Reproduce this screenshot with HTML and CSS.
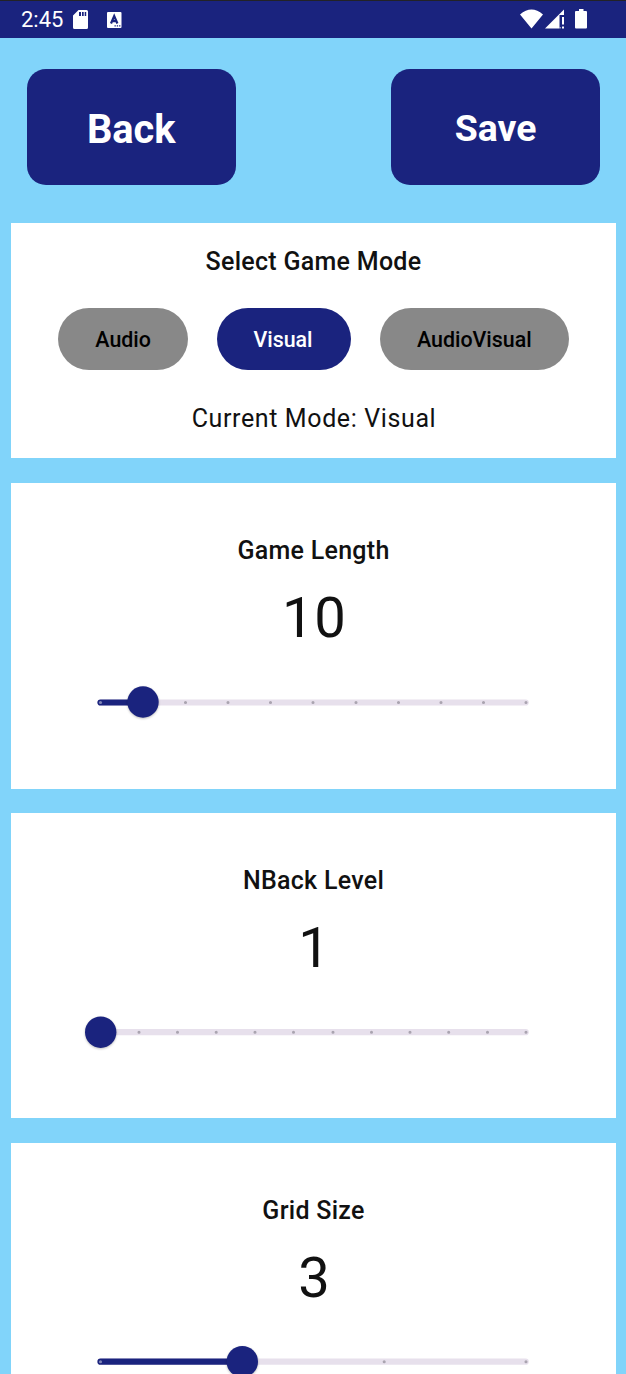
FILE: index.html
```html
<!DOCTYPE html>
<html lang="en">
<head>
<meta charset="utf-8">
<title>Settings</title>
<link rel="stylesheet" href="styles.css">
</head>
<body>
<header class="status">
  <span class="clock">2:45</span>
  <svg class="sd" width="15" height="19" viewBox="0 0 15 19"><path fill="#fff" fill-rule="evenodd" d="M5.5 0H13.5Q15 0 15 1.5V17.5Q15 19 13.5 19H1.500Q0 19 0 17.500V5.500ZM6 2V6H8V2ZM9 2V6H10.700V2ZM11.700 2V6H13.200V2Z"/></svg>
  <svg class="lang" width="15" height="16" viewBox="0 0 15 16"><rect width="14.500" height="16" rx="1" fill="#fff"/><path d="M4 11.500L7.200 4L10.400 11.500M5.200 9.200H9.200" fill="none" stroke="#1a237e" stroke-width="2.200"/><path d="M7.500 13.800h1.300m1 0h1.300m1 0h1.300" stroke="#1a237e" stroke-width="1.200"/></svg>
  <svg class="signals" width="68" height="22" viewBox="0 0 68 22"><path fill="#fff" d="M0 5.500Q11.500-4.500 23 5.500L11.500 19.500ZM25 19.500L44 0.500V6H39.500V19.500ZM42 8h2v7.500h-2zM42 17.500h2v2h-2zM59 0h4.500v2h2.500q1 0 1 1v15.500q0 1-1 1h-10q-1 0-1-1V3q0-1 1-1h3z"/><path fill="#fff" opacity=".5" d="M39.500 18h1.500v1.500h-1.500z"/></svg>
</header>
<main>
  <nav class="actions">
    <button class="action back">Back</button>
    <button class="action save">Save</button>
  </nav>
  <section class="card mode">
    <h2>Select Game Mode</h2>
    <div class="pills">
      <button class="pill audio">Audio</button>
      <button class="pill visual">Visual</button>
      <button class="pill both">AudioVisual</button>
    </div>
    <p class="current">Current Mode: Visual</p>
  </section>
  <section class="card setting length">
    <h2>Game Length</h2>
    <p class="value">10</p>
    <svg class="slider" width="464" height="40" viewBox="82 683 464 40">
      <path class="track" d="M100.500 702.500H525.700"/><path class="filled" d="M100.500 702.500H143"/>
      <path class="ticks" d="M185.500 702.500h0M228 702.500h0M270.500 702.500h0M313 702.500h0M356 702.500h0M398.500 702.500h0M441 702.500h0M483.500 702.500h0M526 702.500h0"/><path class="ticks lit" d="M100.500 702.500h0"/>
      <circle class="thumb" cx="143" cy="702" r="15.700"/>
    </svg>
  </section>
  <section class="card setting level">
    <h2>NBack Level</h2>
    <p class="value">1</p>
    <svg class="slider" width="464" height="40" viewBox="82 683 464 40">
      <path class="track" d="M100.500 702.200H525.700"/>
      <path class="ticks" d="M139 702.200h0M177.500 702.200h0M216.200 702.200h0M255 702.200h0M293.500 702.200h0M333 702.200h0M371.500 702.200h0M410 702.200h0M448.700 702.200h0M487.500 702.200h0M526 702.200h0"/>
      <circle class="thumb" cx="100.700" cy="702.200" r="15.700"/>
    </svg>
  </section>
  <section class="card setting last">
    <h2>Grid Size</h2>
    <p class="value">3</p>
    <svg class="slider" width="464" height="31" viewBox="82 683 464 31">
      <path class="track" d="M100.500 701.700H525.700"/><path class="filled" d="M100.500 701.700H242"/>
      <path class="ticks" d="M384.200 701.700h0M526 701.700h0"/><path class="ticks lit" d="M100.500 701.700h0"/>
      <circle class="thumb" cx="242.300" cy="701.700" r="15.700"/>
    </svg>
  </section>
</main>
</body>
</html>
```
FILE: styles.css
```css
* { box-sizing: border-box; }
html, body { height: 1374px; overflow: hidden; }
body { margin: 0; background: #81d4fa; font-family: Roboto, sans-serif; color: #111; }
h2, p { margin: 0; }
button { border: 0; padding: 0; font-family: inherit; }
svg { display: block; flex: none; }
.status { display: flex; height: 38px; background: #1a237e; border-top: 1px solid #222226; padding-left: 21px; color: #fff; }
.clock { width: 52px; font-size: 22px; line-height: 37px; }
.sd { margin-top: 9px; }
.lang { margin: 11px 0 0 19px; }
.signals { margin: 8px 0 0 398px; }
.actions { display: flex; justify-content: space-between; padding: 31px 26px 0 27px; }
.action { width: 209px; height: 116px; border-radius: 19px; background: #1a237e; color: #fff; font-weight: 700; }
.back { width: 208.500px; font-size: 39.800px; padding-top: 4px; }
.save { font-size: 37.400px; padding-top: 2px; }
.card { display: flex; flex-direction: column; align-items: center; margin: 0 10px 0 11px; background: #fff; }
.card h2 { font-size: 25px; line-height: 38px; font-weight: 500; letter-spacing: .28px; }
.mode { height: 235px; margin-top: 38px; padding-top: 20px; }
.pills { display: flex; justify-content: center; gap: 28.500px; margin-top: 26.600px; }
.pill { height: 62px; border-radius: 31px; background: #888; color: #000; font-size: 21.400px; font-weight: 500; letter-spacing: 0; padding-top: 2px; }
.audio { width: 130px; }
.visual { width: 134.700px; padding-right: 2px; background: #1a237e; color: #fff; }
.both { width: 189px; }
.current { margin-top: 30.400px; padding-left: 1px; font-size: 25px; line-height: 38px; letter-spacing: .62px; }
.setting { height: 305px; margin-top: 25px; padding-top: 49px; }
.length { height: 306px; }
.level { margin-top: 24px; }
.setting.last { height: 231px; overflow: hidden; }
.value { margin-top: 18px; padding-left: 1.500px; font-size: 56.200px; line-height: 60px; letter-spacing: .6px; }
.slider { margin-top: 35px; overflow: visible; }
.last .slider { overflow: hidden; }
.track, .filled, .ticks { fill: none; stroke-linecap: round; stroke-width: 6.200; }
.track { stroke: #e7e0ec; }
.filled { stroke: #1a237e; }
.ticks { stroke: #aaa4b0; stroke-width: 3.100; }
.lit { stroke: #8085b6; }
.thumb { fill: #1a237e; filter: drop-shadow(0 1px 1px rgba(0, 0, 0, .25)); }
```
